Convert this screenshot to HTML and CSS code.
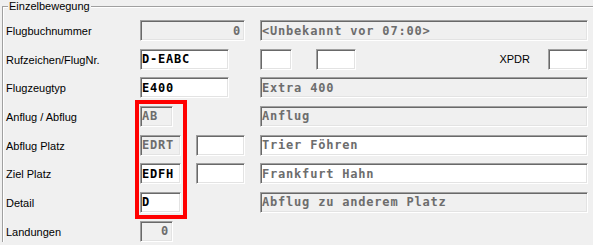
FILE: index.html
```html
<!DOCTYPE html>
<html lang="de">
<head>
    <meta charset="UTF-8">
    <title>Einzelbewegung</title>
    <link rel="stylesheet" href="styles.css">
</head>
<body>
    <div class="screen">
        <fieldset class="group">
            <legend>Einzelbewegung</legend>
            <div class="rows">
                <div class="row">
                    <label class="lbl">Flugbuchnummer</label>
                    <div class="mid"><input class="fld off num w-long" value="0" readonly></div>
                    <input class="fld off wide" value="<Unbekannt vor 07:00>" readonly>
                </div>
                <div class="row">
                    <label class="lbl">Rufzeichen/FlugNr.</label>
                    <div class="mid"><input class="fld w-call" value="D-EABC"></div>
                    <div class="extra">
                        <input class="fld w-32">
                        <input class="fld w-40">
                        <span class="xpdr">XPDR</span>
                        <input class="fld w-40">
                    </div>
                </div>
                <div class="row">
                    <label class="lbl">Flugzeugtyp</label>
                    <div class="mid"><input class="fld w-call" value="E400"></div>
                    <input class="fld off wide" value="Extra 400" readonly>
                </div>
                <div class="row">
                    <label class="lbl">Anflug / Abflug</label>
                    <div class="mid"><input class="fld off w-short" value="AB" readonly></div>
                    <input class="fld off wide" value="Anflug" readonly>
                </div>
                <div class="row">
                    <label class="lbl">Abflug Platz</label>
                    <div class="mid">
                        <input class="fld off w-code" value="EDRT" readonly>
                        <input class="fld w-ext">
                    </div>
                    <input class="fld dim wide" value="Trier Föhren" readonly>
                </div>
                <div class="row">
                    <label class="lbl">Ziel Platz</label>
                    <div class="mid">
                        <input class="fld w-code" value="EDFH">
                        <input class="fld w-ext">
                    </div>
                    <input class="fld dim wide" value="Frankfurt Hahn" readonly>
                </div>
                <div class="row">
                    <label class="lbl">Detail</label>
                    <div class="mid"><input class="fld w-code" value="D"></div>
                    <input class="fld off wide" value="Abflug zu anderem Platz" readonly>
                </div>
                <div class="row">
                    <label class="lbl">Landungen</label>
                    <div class="mid"><input class="fld off num w-short" value="0" readonly></div>
                </div>
            </div>
        </fieldset>
        <div class="mark"></div>
    </div>
</body>
</html>
```

FILE: styles.css
```css
html, body {
    margin: 0;
    background: #f0f0f0;
    overflow: hidden;
}
.screen {
    position: relative;
    width: 593px;
    height: 245px;
    font-family: "Liberation Sans", Arial, sans-serif;
    font-size: 11px;
    color: #000;
}
.group {
    margin: 0 0 0 2px;
    padding: 7px 5px 0 3px;
    min-width: 0;
    border: none;
    border-top: 1px solid #a0a0a0;
    border-left: 1px solid #a0a0a0;
    box-shadow: inset 1px 1px 0 #fff;
}
.group legend {
    margin-left: 2px;
    padding: 0 1px;
    line-height: 13px;
    background: #f0f0f0;
}
.rows {
    display: flex;
    flex-direction: column;
    gap: 7.67px;
}
.row {
    display: flex;
    height: 21px;
}
.lbl {
    width: 134px;
    flex-shrink: 0;
    line-height: 21px;
    padding-top: 1px;
}
.mid {
    width: 120px;
    flex-shrink: 0;
    display: flex;
    gap: 15px;
}
.extra {
    display: flex;
    flex: 1;
    gap: 24px;
}
.xpdr {
    margin-left: auto;
    margin-right: -6px;
    line-height: 21px;
}
.fld {
    box-sizing: border-box;
    height: 21px;
    margin: 0;
    padding: 0 1px;
    border: 1px solid;
    border-color: #a0a0a0 #fff #fff #a0a0a0;
    box-shadow: inset 1px 1px 0 #696969, inset -1px -1px 0 #e3e3e3;
    background: #fff;
    font-family: "DejaVu Sans Mono", monospace;
    font-weight: bold;
    font-size: 12px;
    letter-spacing: 0.8px;
    color: #000;
    outline: none;
}
.off {
    background: #f0f0f0;
    color: #6d6d6d;
}
.dim {
    color: #6d6d6d;
}
.num {
    text-align: right;
    padding-right: 3px;
}
.wide { width: 328px; }
.w-long { width: 105px; }
.w-call { width: 89px; }
.w-code { width: 41px; }
.w-short { width: 33px; }
.w-ext { width: 49px; }
.w-32 { width: 32px; }
.w-40 { width: 40px; }
.mark {
    position: absolute;
    left: 135px;
    top: 100px;
    width: 52px;
    height: 119px;
    box-sizing: border-box;
    border: 4px solid #f00;
}
```
